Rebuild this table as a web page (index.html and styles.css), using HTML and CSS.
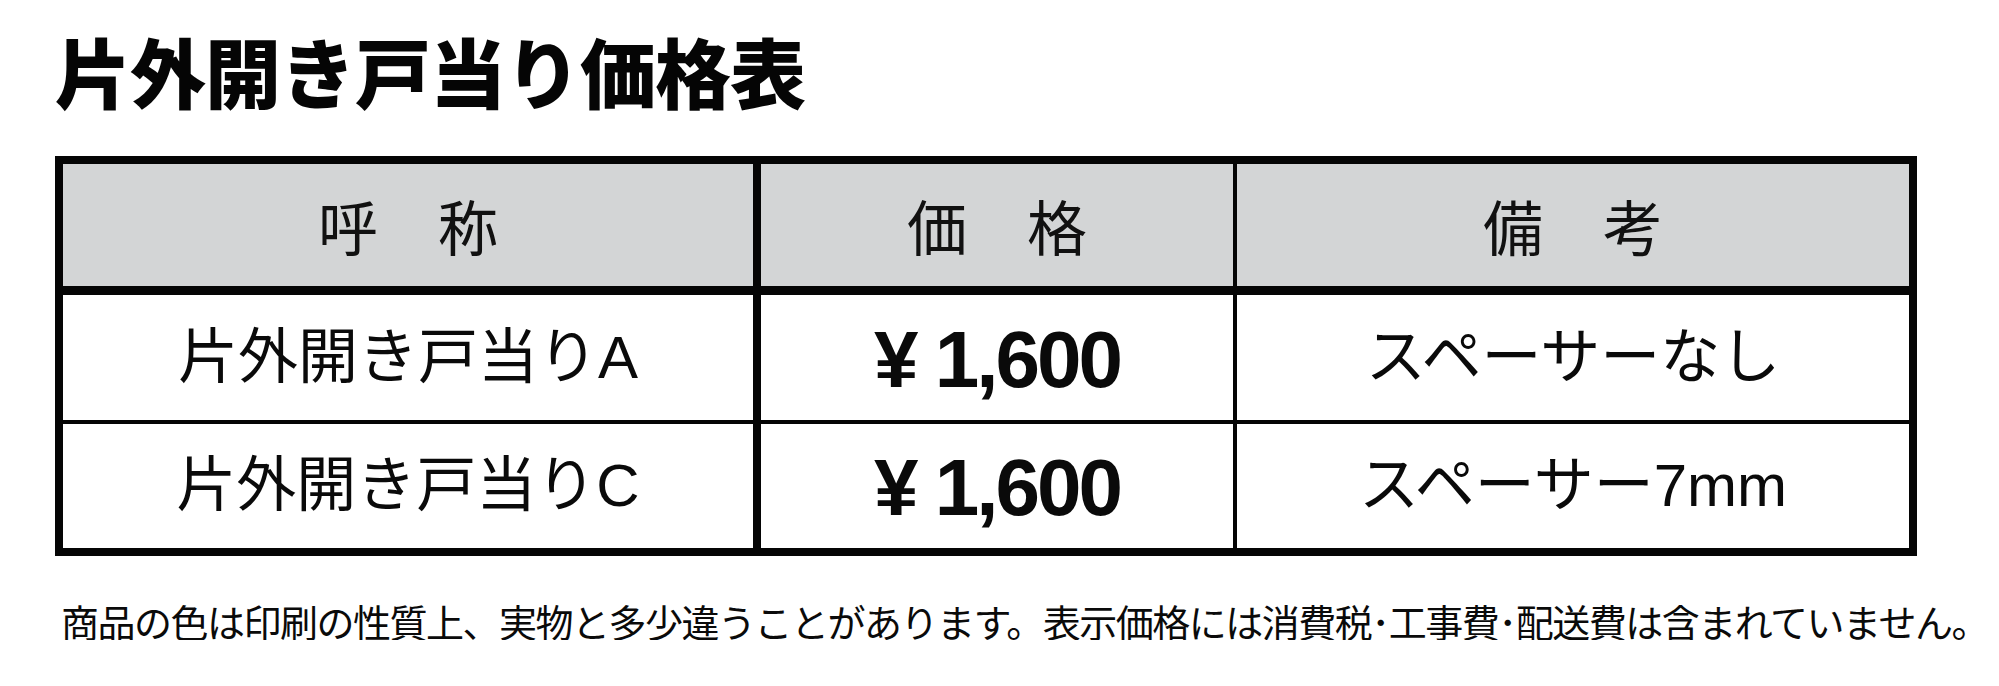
FILE: index.html
```html
<!DOCTYPE html>
<html lang="ja">
<head>
<meta charset="utf-8">
<title>片外開き戸当り価格表</title>
<link rel="stylesheet" href="styles.css">
</head>
<body>
<main class="page">
  <h1 class="title">片外開き戸当り価格表</h1>
  <div class="price-table">
    <div class="cell head c1">呼　称</div>
    <div class="cell head c2">価　格</div>
    <div class="cell head c3">備　考</div>

    <div class="cell row1 c1">片外開き戸当りA</div>
    <div class="cell row1 c2 price">¥ 1,600</div>
    <div class="cell row1 c3">スペーサーなし</div>

    <div class="cell c1">片外開き戸当りC</div>
    <div class="cell c2 price">¥ 1,600</div>
    <div class="cell c3">スペーサー7mm</div>
  </div>
  <p class="note">商品の色は印刷の性質上、実物と多少違うことがあります。表示価格には消費税･工事費･配送費は含まれていません。</p>
</main>
</body>
</html>
```

FILE: styles.css
```css
* {
  box-sizing: border-box;
}

html, body {
  margin: 0;
  padding: 0;
  background: #ffffff;
}

body {
  font-family: "Liberation Sans", "Noto Sans CJK JP", sans-serif;
  color: #0a0a0a;
}

.page {
  display: flex;
  flex-direction: column;
  align-items: flex-start;
  padding: 31px 0 0 55px;
}

.title {
  margin: 0;
  font-family: "Noto Sans CJK JP", sans-serif;
  font-weight: 900;
  font-size: 76px;
  line-height: 78px;
  letter-spacing: -1px;
  color: #050505;
}

.price-table {
  margin-top: 47px;
  display: grid;
  grid-template-columns: 698px 476px 672px;
  grid-template-rows: 131px 129px 124px;
  border: 8px solid #050505;
}

.cell {
  display: flex;
  align-items: center;
  justify-content: center;
  font-size: 60px;
  line-height: 1;
  background: #ffffff;
}

.c1 {
  border-right: 8px solid #050505;
}

.c2 {
  border-right: 4px solid #050505;
}

.head {
  background: #d3d5d6;
  border-bottom: 9px solid #050505;
  font-family: "Noto Sans CJK JP", sans-serif;
  font-size: 60px;
  color: #111111;
}

.row1 {
  border-bottom: 4px solid #050505;
}

.price {
  font-family: "Liberation Sans", sans-serif;
  font-weight: 700;
  font-size: 80px;
  letter-spacing: -3px;
  padding-top: 4px;
}

.note {
  margin: 46px 0 0 6px;
  font-family: "Noto Sans CJK JP", sans-serif;
  font-size: 38px;
  line-height: 38px;
  letter-spacing: -1.5px;
  color: #0a0a0a;
  white-space: nowrap;
}
```
